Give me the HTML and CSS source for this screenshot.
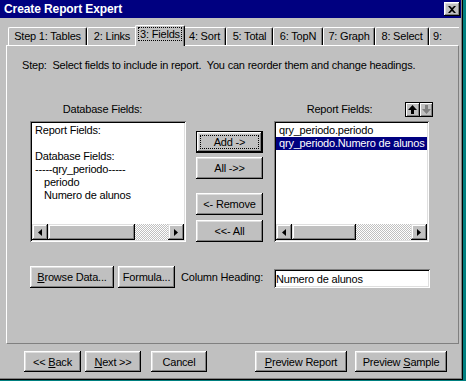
FILE: index.html
```html
<!DOCTYPE html>
<html lang="en">
<head>
    <meta charset="UTF-8">
    <title>Create Report Expert</title>
    <link rel="stylesheet" href="styles.css">
</head>
<body>
    <div class="window">
        <div class="titlebar">
            <span class="title">Create Report Expert</span>
            <button class="close-btn">
                <svg width="8" height="7" viewBox="0 0 8 7"><path d="M0 0h2l2 2 2-2h2L5 3.5 8 7H6L4 5 2 7H0l3-3.5z" fill="#000"/></svg>
            </button>
        </div>

        <!-- Tab strip -->
        <div class="tabs">
            <div class="tab t1">Step 1: Tables</div>
            <div class="tab t2">2: Links</div>
            <div class="tab t3 selected"><span class="focus">3: Fields</span></div>
            <div class="tab t4">4: Sort</div>
            <div class="tab t5">5: Total</div>
            <div class="tab t6">6: TopN</div>
            <div class="tab t7">7: Graph</div>
            <div class="tab t8">8: Select</div>
            <div class="tab t9">9:</div>
        </div>

        <div class="panel">
            <p class="step">Step:  Select fields to include in report.  You can reorder them and change headings.</p>

            <div class="fields">
                <div class="col-left">
                    <div class="label label-left">Database Fields:</div>
                    <div class="listbox">
                        <div class="list-items">
                            <div>Report Fields:</div>
                            <div>&nbsp;</div>
                            <div>Database Fields:</div>
                            <div>-----qry_periodo-----</div>
                            <div class="indent">periodo</div>
                            <div class="indent">Numero de alunos</div>
                        </div>
                        <div class="hscroll">
                            <div class="sb-btn">
                                <svg width="4" height="7" viewBox="0 0 4 7"><path d="M4 0v7L0 3.5z" fill="#000"/></svg>
                            </div>
                            <div class="sb-thumb thumb-left"></div>
                            <div class="sb-track"></div>
                            <div class="sb-btn">
                                <svg width="4" height="7" viewBox="0 0 4 7"><path d="M0 0v7l4-3.5z" fill="#000"/></svg>
                            </div>
                        </div>
                    </div>
                </div>

                <div class="mid-buttons">
                    <button class="btn move default"><span class="focus-box">Add -&gt;</span></button>
                    <button class="btn move all-add">All -&gt;&gt;</button>
                    <button class="btn move remove">&lt;- Remove</button>
                    <button class="btn move all-remove">&lt;&lt;- All</button>
                </div>

                <div class="col-right">
                    <div class="label-row">
                        <div class="label label-right">Report Fields:</div>
                        <div class="order-btns">
                            <div class="order-btn up">
                                <svg width="9" height="9" viewBox="0 0 9 9"><path d="M4.5 0L9 5H6v4H3V5H0z" fill="#000"/></svg>
                            </div>
                            <div class="order-btn down">
                                <svg width="9" height="9" viewBox="0 0 9 9"><path d="M3 0h3v4h3L4.5 9 0 4h3z" fill="#808080"/></svg>
                            </div>
                        </div>
                    </div>
                    <div class="listbox listbox-right">
                        <div class="list-items">
                            <div>qry_periodo.periodo</div>
                            <div class="selected-item">qry_periodo.Numero de alunos</div>
                        </div>
                        <div class="hscroll">
                            <div class="sb-btn">
                                <svg width="4" height="7" viewBox="0 0 4 7"><path d="M4 0v7L0 3.5z" fill="#000"/></svg>
                            </div>
                            <div class="sb-thumb thumb-right"></div>
                            <div class="sb-track"></div>
                            <div class="sb-btn">
                                <svg width="4" height="7" viewBox="0 0 4 7"><path d="M0 0v7l4-3.5z" fill="#000"/></svg>
                            </div>
                        </div>
                    </div>
                </div>
            </div>

            <div class="heading-row">
                <button class="btn browse"><u>B</u>rowse Data...</button>
                <button class="btn formula">Formula...</button>
                <span class="heading-label">Column Heading:</span>
                <input class="text-input" type="text" value="Numero de alunos">
            </div>
        </div>

        <!-- Wizard buttons -->
        <div class="footer">
            <button class="btn back">&lt;&lt; <u>B</u>ack</button>
            <button class="btn next"><u>N</u>ext &gt;&gt;</button>
            <button class="btn cancel">Cancel</button>
            <button class="btn preview-report"><u>P</u>review Report</button>
            <button class="btn preview-sample">Preview <u>S</u>ample</button>
        </div>
    </div>
</body>
</html>
```

FILE: styles.css
```css
* {
    box-sizing: border-box;
}
body {
    margin: 0;
    background: #008080;
    font-family: "Liberation Sans", Arial, sans-serif;
    font-size: 11px;
    letter-spacing: -0.2px;
    color: #000;
}
.window {
    width: 463px;
    height: 380px;
    padding-right: 2px;
    background: #c0c0c0;
    box-shadow: inset -1px -1px #000, inset -2px -2px #808080;
    overflow: hidden;
}

/* Title bar */
.titlebar {
    height: 18px;
    background: #000080;
    display: flex;
    align-items: center;
    padding: 0 1px 0 4px;
}
.title {
    color: #fff;
    font-weight: bold;
    font-size: 12px;
    letter-spacing: -0.1px;
}
.close-btn {
    margin-left: auto;
    width: 16px;
    height: 14px;
    padding: 0;
    border: none;
    background: #c0c0c0;
    display: flex;
    align-items: center;
    justify-content: center;
    box-shadow: inset -1px -1px #000, inset 1px 1px #fff, inset -2px -2px #808080, inset 2px 2px #dfdfdf;
}

/* Tabs */
.tabs {
    position: relative;
    z-index: 1;
    display: flex;
    align-items: flex-start;
    margin-top: 7px;
    padding-left: 8px;
    width: 459px;
    height: 21px;
    overflow: hidden;
}
.tab {
    flex: none;
    height: 18px;
    margin-top: 2px;
    background: #c0c0c0;
    border-top: 1px solid #fff;
    border-left: 1px solid #fff;
    border-right: 1px solid #000;
    border-radius: 2px 2px 0 0;
    box-shadow: inset -1px 0 #808080;
    text-align: center;
    line-height: 16px;
    white-space: nowrap;
}
.tab.selected {
    position: relative;
    z-index: 1;
    height: 21px;
    margin: 0 -2px;
    line-height: 17px;
}
.tab .focus {
    outline: 1px dotted #000;
    padding: 0 1px;
}
.t1 { width: 79px; }
.t2 { width: 50px; }
.t3 { width: 50px; }
.t4 { width: 43px; }
.t5 { width: 47px; }
.t6 { width: 50px; }
.t7 { width: 52px; }
.t8 { width: 54px; }
.t9 { width: 48px; text-align: left; padding-left: 3px; }

/* Main panel */
.panel {
    margin: -1px 0 0 6px;
    width: 453px;
    height: 299px;
    border-top: 1px solid #fff;
    border-left: 1px solid #fff;
    border-right: 1px solid #808080;
    border-bottom: 1px solid #808080;
    padding: 13px 0 0 15px;
}
.step {
    margin: 0;
    line-height: 13px;
    white-space: pre;
}
.fields {
    display: flex;
    align-items: flex-start;
    margin: 30px 0 0 8px;
}
.col-left {
    width: 156px;
}
.label {
    line-height: 15px;
    text-align: center;
}
.label-left {
    padding-right: 11px;
    margin-bottom: 4px;
}
.listbox {
    height: 121px;
    background: #fff;
    padding: 2px;
    display: flex;
    flex-direction: column;
    box-shadow: inset 1px 1px #808080, inset -1px -1px #fff, inset 2px 2px #000, inset -2px -2px #dfdfdf;
}
.list-items {
    flex: 1;
    padding-top: 1px;
    line-height: 13px;
    white-space: nowrap;
    overflow: hidden;
}
.list-items div {
    padding-left: 3px;
}
.list-items .indent {
    padding-left: 12px;
}
.list-items .selected-item {
    background: #000080;
    color: #fff;
}

/* Horizontal scrollbar */
.hscroll {
    display: flex;
    height: 16px;
}
.sb-btn {
    width: 16px;
    display: flex;
    align-items: center;
    justify-content: center;
    background: #c0c0c0;
    box-shadow: inset -1px -1px #000, inset 1px 1px #dfdfdf, inset -2px -2px #808080, inset 2px 2px #fff;
}
.sb-thumb {
    background: #c0c0c0;
    box-shadow: inset -1px -1px #000, inset 1px 1px #dfdfdf, inset -2px -2px #808080, inset 2px 2px #fff;
}
.thumb-left { width: 87px; }
.thumb-right { width: 64px; }
.sb-track {
    flex: 1;
    background: repeating-conic-gradient(#fff 0 25%, #c0c0c0 0 50%) 0 0 / 2px 2px;
}

/* Buttons */
.btn {
    height: 22px;
    padding: 0;
    border: none;
    background: #c0c0c0;
    font: inherit;
    letter-spacing: inherit;
    color: #000;
    box-shadow: inset -1px -1px #000, inset 1px 1px #fff, inset -2px -2px #808080, inset 2px 2px #dfdfdf;
}
.btn.default {
    display: flex;
    padding: 4px;
    box-shadow: inset 0 0 0 1px #000, inset -2px -2px #000, inset 2px 2px #fff, inset -3px -3px #808080, inset 3px 3px #dfdfdf;
}
.focus-box {
    flex: 1;
    display: flex;
    align-items: center;
    justify-content: center;
    border: 1px dotted #000;
}
.mid-buttons {
    display: flex;
    flex-direction: column;
    width: 67px;
    margin-left: 10px;
    padding-top: 29px;
}
.mid-buttons .btn {
    width: 67px;
}
.all-add { margin-top: 4px; }
.remove { margin-top: 14px; }
.all-remove { margin-top: 5px; }

.col-right {
    width: 159px;
    margin-left: 11px;
}
.label-row {
    display: flex;
    height: 15px;
    margin-bottom: 4px;
}
.label-right {
    width: 131px;
}
.order-btns {
    display: flex;
    border: 1px solid #000;
}
.order-btn {
    width: 13px;
    height: 13px;
    display: flex;
    align-items: center;
    justify-content: center;
    box-shadow: inset 1px 1px #fff, inset -1px -1px #808080;
}
.order-btn.down {
    border-left: 1px solid #000;
}
.listbox-right {
    width: 155px;
}

/* Column heading row */
.heading-row {
    display: flex;
    align-items: center;
    margin: 24px 0 0 8px;
}
.browse { width: 84px; }
.formula { width: 57px; margin-left: 4px; }
.heading-label {
    width: 93px;
    margin-left: 6px;
}
.text-input {
    align-self: flex-end;
    width: 156px;
    height: 19px;
    margin: 0;
    padding: 0 2px;
    border: none;
    background: #fff;
    font: inherit;
    letter-spacing: inherit;
    color: #000;
    box-shadow: inset 1px 1px #808080, inset -1px -1px #fff, inset 2px 2px #000, inset -2px -2px #dfdfdf;
}

/* Footer */
.footer {
    display: flex;
    margin-top: 7px;
    padding-left: 24px;
}
.footer .btn {
    height: 21px;
}
.back { width: 57px; }
.next { width: 56px; margin-left: 4px; }
.cancel { width: 56px; margin-left: 10px; }
.preview-report { width: 92px; margin-left: 48px; }
.preview-sample { width: 92px; margin-left: 8px; }
```
